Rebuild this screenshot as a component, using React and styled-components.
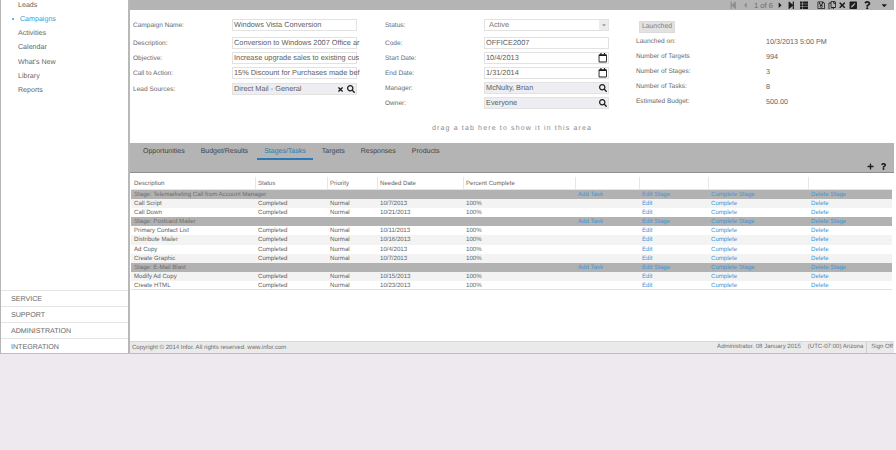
import React from "react";
import styled, { createGlobalStyle } from "styled-components";
import {
  FaStepBackward,
  FaCaretLeft,
  FaCaretRight,
  FaStepForward,
  FaThList,
  FaRegSave,
  FaRegCopy,
  FaTimes,
  FaPenSquare,
  FaQuestion,
  FaCaretDown,
  FaSearch,
  FaRegCalendar,
  FaPlus,
} from "react-icons/fa";

const GlobalStyle = createGlobalStyle`
  html, body {
    margin: 0;
    padding: 0;
    background: #ede9ef;
    overflow: hidden;
  }
  body {
    font-family: "Liberation Sans", Arial, sans-serif;
    color: #666;
    text-rendering: geometricPrecision;
  }
`;

const Shell = styled.div`
  display: flex;
  width: 896px;
  height: 354px;
  background: #fff;
  border-bottom: 1px solid #bdbdbd;
  box-sizing: border-box;
  overflow: hidden;
`;

const Sidebar = styled.aside`
  width: 130px;
  flex: none;
  box-sizing: border-box;
  border-left: 1px solid #b5b5b5;
  border-right: 2px solid #b8b8b8;
  display: flex;
  flex-direction: column;
  justify-content: space-between;
  overflow: hidden;
`;

const NavList = styled.ul`
  list-style: none;
  margin: -2.5px 0 0;
  padding: 0;
`;

const NavItem = styled.li`
  position: relative;
  height: 14.3px;
  line-height: 14.3px;
  font-size: 7.1px;
  padding-left: ${(p) => (p.$active ? "19px" : "17px")};
  color: ${(p) => (p.$active ? "#3f97d8" : "#666")};
  ${(p) =>
    p.$active &&
    `&::before {
      content: "";
      position: absolute;
      left: 10.5px;
      top: 6px;
      width: 2px;
      height: 2px;
      border-radius: 50%;
      background: #3f97d8;
    }`}
`;

const Modules = styled.div`
  display: flex;
  flex-direction: column;
  margin-bottom: -1px;
`;

const ModuleRow = styled.div`
  height: 16px;
  line-height: 16px;
  font-size: 7.1px;
  padding-left: 10px;
  color: #666;
  border-top: 1px solid #e4e4e4;
  box-sizing: border-box;
`;

const Main = styled.main`
  flex: 1;
  min-width: 0;
  display: flex;
  flex-direction: column;
  border-right: 2px solid #fff;
`;

const TopBar = styled.div`
  height: 10px;
  flex: none;
  background: #b4b4b4;
  display: flex;
  align-items: center;
  justify-content: flex-end;
  padding-right: 5px;
`;

const ToolIcon = styled.span`
  display: inline-flex;
  width: 10px;
  flex: none;
  justify-content: center;
  font-size: 8.5px;
  color: ${(p) => (p.$dim ? "#8e8e8e" : "#1c1c1c")};
  margin-left: ${(p) => p.$gap || 0}px;
`;

const Pager = styled.span`
  font-size: 7.6px;
  color: #6c6c6c;
  margin: 0 2px 0 4px;
  white-space: nowrap;
`;

const FormArea = styled.section`
  height: 133px;
  flex: none;
  display: grid;
  grid-template-columns: 253px 252px 1fr;
  position: relative;
  box-sizing: border-box;
  padding-top: 7.5px;
`;

const FormColumn = styled.div`
  display: flex;
  flex-direction: column;
  padding-left: ${(p) => p.$left}px;
`;

const FieldRow = styled.div`
  display: flex;
  align-items: center;
  height: ${(p) => p.$h}px;
  margin-top: ${(p) => p.$mt || 0}px;
  flex: none;
`;

const Label = styled.label`
  width: ${(p) => p.$w || 99}px;
  flex: none;
  font-size: 6.55px;
  color: #6a6a6a;
  white-space: nowrap;
`;

const Input = styled.div`
  width: 125px;
  height: 12px;
  box-sizing: border-box;
  border: 1px solid #e2e2e2;
  background: ${(p) => (p.$lookup ? "#eeeef2" : "#fff")};
  font-size: 7.37px;
  line-height: 10px;
  padding-left: 1px;
  color: #5e5e5e;
  display: flex;
  align-items: center;
  white-space: nowrap;
`;

const InputText = styled.span`
  flex: 1;
  padding-left: ${(p) => p.$inset || 0}px;
  color: ${(p) => p.$color || "inherit"};
`;

const InputIcon = styled.span`
  display: inline-flex;
  font-size: ${(p) => p.$size || 8}px;
  color: #1c1c1c;
  margin-right: ${(p) => p.$right || 1}px;
  flex: none;
`;

const SelectArrow = styled.span`
  width: 9px;
  height: 10px;
  background: #ececec;
  color: #999;
  font-size: 6px;
  display: flex;
  align-items: center;
  justify-content: center;
  flex: none;
`;

const LaunchButton = styled.div`
  width: 36px;
  height: 12px;
  margin-left: 3px;
  background: #e2e2e2;
  border: 1px solid #dadada;
  box-sizing: border-box;
  font-size: 6.85px;
  line-height: 10px;
  text-align: center;
  color: #808080;
`;

const SummaryList = styled.div`
  margin-top: -1.5px;
`;

const Value = styled.span`
  font-size: 7.2px;
  color: #666;
`;

const DropHint = styled.div`
  position: absolute;
  left: 302px;
  top: 115px;
  font-size: 7px;
  letter-spacing: 1.15px;
  color: #8a8a8a;
  white-space: nowrap;
`;

const TabBand = styled.div`
  height: 30px;
  flex: none;
  box-sizing: border-box;
  background: #b4b4b4;
  border-bottom: 1px solid #8f8f8f;
  display: flex;
  gap: 2px;
  padding-left: 6px;
  position: relative;
`;

const Tab = styled.div`
  height: 17px;
  line-height: 15px;
  padding: 1px 7px 0;
  font-size: 7px;
  color: ${(p) => (p.$active ? "#2f78b8" : "#444")};
  box-sizing: border-box;
  border-bottom: 2px solid ${(p) => (p.$active ? "#2f78b8" : "transparent")};
  white-space: nowrap;
`;

const TabActions = styled.div`
  position: absolute;
  right: 7px;
  bottom: 2px;
  display: flex;
  gap: 6px;
  font-size: 7px;
  color: #1c1c1c;
`;

const TableArea = styled.div`
  flex: 1;
  min-height: 0;
  padding: 4px 0 0 1px;
`;

const Grid = styled.div`
  display: grid;
  grid-template-columns: 124px 72px 50px 86px 112px 64px 69px 100px 84px;
`;

const HeadCell = styled.div`
  height: 13px;
  line-height: 13px;
  font-size: 6.1px;
  color: #666;
  padding-left: 2px;
  border-left: 1px solid ${(p) => (p.$first ? "transparent" : "#e6e6e6")};
  border-bottom: 1px solid #e4e4e4;
  box-sizing: border-box;
  white-space: nowrap;
`;

const Cell = styled.div`
  height: 9.1px;
  line-height: 10px;
  font-size: 6.1px;
  white-space: nowrap;
  padding-left: 3px;
  box-sizing: border-box;
  color: ${(p) => (p.$link ? "#3f97d8" : "#5f5f5f")};
  background: ${(p) =>
    p.$stage ? "#b2b2b2" : p.$odd ? "#f3f3f3" : "#fff"};
  border-bottom: ${(p) => (p.$last ? "1px solid #e0e0e0" : "none")};
`;

const StageTitle = styled(Cell)`
  grid-column: span 5;
  color: #6e6e6e;
`;

const Footer = styled.footer`
  height: 12px;
  flex: none;
  background: #eaeaea;
  border-top: 1px solid #d8d8d8;
  box-sizing: border-box;
  display: flex;
  align-items: center;
  font-size: 6.05px;
  color: #6f6f6f;
  padding-left: 2px;
  white-space: nowrap;
`;

const FooterRight = styled.div`
  margin-left: auto;
  display: flex;
  align-items: center;
  height: 100%;
`;

const FooterBit = styled.span`
  margin-left: ${(p) => p.$gap || 0}px;
  padding-left: ${(p) => (p.$split ? 4 : 0)}px;
  padding-right: ${(p) => (p.$split ? 1 : 0)}px;
  border-left: ${(p) => (p.$split ? "1px solid #d0d0d0" : "none")};
  line-height: 11px;
`;

const navItems = ["Leads", "Campaigns", "Activities", "Calendar", "What's New", "Library", "Reports"];
const modules = ["SERVICE", "SUPPORT", "ADMINISTRATION", "INTEGRATION"];
const tabs = ["Opportunities", "Budget/Results", "Stages/Tasks", "Targets", "Responses", "Products"];

const rows = [
  { stage: "Stage: Telemarketing Call from Account Manager" },
  { name: "Call Script", date: "10/7/2013" },
  { name: "Call Down", date: "10/21/2013" },
  { stage: "Stage: Postcard Mailer" },
  { name: "Primary Contact List", date: "10/11/2013" },
  { name: "Distribute Mailer", date: "10/16/2013" },
  { name: "Ad Copy", date: "10/4/2013" },
  { name: "Create Graphic", date: "10/7/2013" },
  { stage: "Stage: E-Mail Blast" },
  { name: "Modify Ad Copy", date: "10/15/2013" },
  { name: "Create HTML", date: "10/23/2013" },
];

const heads = ["Description", "Status", "Priority", "Needed Date", "Percent Complete", "", "", "", ""];

const summary = [
  ["Launched on:", "10/3/2013 5:00 PM", 15],
  ["Number of Targets", "994", 15],
  ["Number of Stages:", "3", 15],
  ["Number of Tasks:", "8", 15.5],
  ["Estimated Budget:", "500.00", 14.5],
];

function Lookup({ clear }) {
  return (
    <>
      {clear && (
        <InputIcon $size={7} $right={3.5}>
          <FaTimes />
        </InputIcon>
      )}
      <InputIcon $size={8} $right={1}>
        <FaSearch />
      </InputIcon>
    </>
  );
}

function Field({ label, mt, lookup, children, text }) {
  return (
    <FieldRow $h={15} $mt={mt}>
      <Label>{label}</Label>
      <Input $lookup={lookup}>
        <InputText>{text}</InputText>
        {children}
      </Input>
    </FieldRow>
  );
}

function DateIcon() {
  return (
    <InputIcon $size={9.5} $right={0}>
      <FaRegCalendar />
    </InputIcon>
  );
}

function TaskRow({ row, odd, last }) {
  const shared = { $odd: odd, $last: last };
  return (
    <>
      <Cell {...shared}>{row.name}</Cell>
      <Cell {...shared}>Completed</Cell>
      <Cell {...shared}>Normal</Cell>
      <Cell {...shared}>{row.date}</Cell>
      <Cell {...shared}>100%</Cell>
      <Cell {...shared} />
      <Cell {...shared} $link>Edit</Cell>
      <Cell {...shared} $link>Complete</Cell>
      <Cell {...shared} $link>Delete</Cell>
    </>
  );
}

function StageRow({ title }) {
  return (
    <>
      <StageTitle $stage>{title}</StageTitle>
      <Cell $stage $link>Add Task</Cell>
      <Cell $stage $link>Edit Stage</Cell>
      <Cell $stage $link>Complete Stage</Cell>
      <Cell $stage $link>Delete Stage</Cell>
    </>
  );
}

export default function App() {
  return (
    <>
      <GlobalStyle />
      <Shell>
        <Sidebar>
          <NavList>
            {navItems.map((item) => (
              <NavItem key={item} $active={item === "Campaigns"}>
                {item}
              </NavItem>
            ))}
          </NavList>
          <Modules>
            {modules.map((m) => (
              <ModuleRow key={m}>{m}</ModuleRow>
            ))}
          </Modules>
        </Sidebar>
        <Main>
          <TopBar>
            <ToolIcon $dim><FaStepBackward /></ToolIcon>
            <ToolIcon $dim $gap={2}><FaCaretLeft /></ToolIcon>
            <Pager>1 of 6</Pager>
            <ToolIcon><FaCaretRight /></ToolIcon>
            <ToolIcon $gap={1}><FaStepForward /></ToolIcon>
            <ToolIcon $gap={3}><FaThList /></ToolIcon>
            <ToolIcon $gap={7}><FaRegSave /></ToolIcon>
            <ToolIcon $gap={1}><FaRegCopy /></ToolIcon>
            <ToolIcon><FaTimes /></ToolIcon>
            <ToolIcon $gap={1}><FaPenSquare /></ToolIcon>
            <ToolIcon $gap={4}><FaQuestion /></ToolIcon>
            <ToolIcon $gap={7}><FaCaretDown /></ToolIcon>
          </TopBar>
          <FormArea>
            <FormColumn $left={3}>
              <Field label="Campaign Name:" text="Windows Vista Conversion" />
              <Field label="Description:" mt={3} text="Conversion to Windows 2007 Office ar" />
              <Field label="Objective:" text="Increase upgrade sales to existing cus" />
              <Field label="Call to Action:" text="15% Discount for Purchases made bef" />
              <Field label="Lead Sources:" mt={1} lookup text="Direct Mail - General">
                <Lookup clear />
              </Field>
            </FormColumn>
            <FormColumn $left={2}>
              <FieldRow $h={15}>
                <Label>Status:</Label>
                <Input>
                  <InputText $inset={3} $color="#777">Active</InputText>
                  <SelectArrow><FaCaretDown /></SelectArrow>
                </Input>
              </FieldRow>
              <Field label="Code:" mt={3} text="OFFICE2007" />
              <Field label="Start Date:" text="10/4/2013"><DateIcon /></Field>
              <Field label="End Date:" text="1/31/2014"><DateIcon /></Field>
              <Field label="Manager:" lookup text="McNulty, Brian"><Lookup /></Field>
              <Field label="Owner:" lookup text="Everyone"><Lookup /></Field>
            </FormColumn>
            <FormColumn $left={1}>
              <FieldRow $h={18}><LaunchButton>Launched</LaunchButton></FieldRow>
              <SummaryList>
                {summary.map(([label, value, h]) => (
                  <FieldRow key={label} $h={h}>
                    <Label $w={130}>{label}</Label>
                    <Value>{value}</Value>
                  </FieldRow>
                ))}
              </SummaryList>
            </FormColumn>
            <DropHint>drag a tab here to show it in this area</DropHint>
          </FormArea>
          <TabBand>
            {tabs.map((name) => (
              <Tab key={name} $active={name === "Stages/Tasks"}>
                {name}
              </Tab>
            ))}
            <TabActions>
              <FaPlus />
              <FaQuestion />
            </TabActions>
          </TabBand>
          <TableArea>
            <Grid>
              {heads.map((h, i) => (
                <HeadCell key={i} $first={i === 0}>
                  {h}
                </HeadCell>
              ))}
              {rows.map((row, i) =>
                row.stage ? (
                  <StageRow key={i} title={row.stage} />
                ) : (
                  <TaskRow key={i} row={row} odd={i % 2 === 1} last={i === rows.length - 1} />
                )
              )}
            </Grid>
          </TableArea>
          <Footer>
            Copyright © 2014 Infor. All rights reserved. www.infor.com
            <FooterRight>
              <FooterBit>Administrator. 08 January 2015</FooterBit>
              <FooterBit $gap={7}>(UTC-07:00) Arizona</FooterBit>
              <FooterBit $gap={3} $split>Sign Off</FooterBit>
            </FooterRight>
          </Footer>
        </Main>
      </Shell>
    </>
  );
}
